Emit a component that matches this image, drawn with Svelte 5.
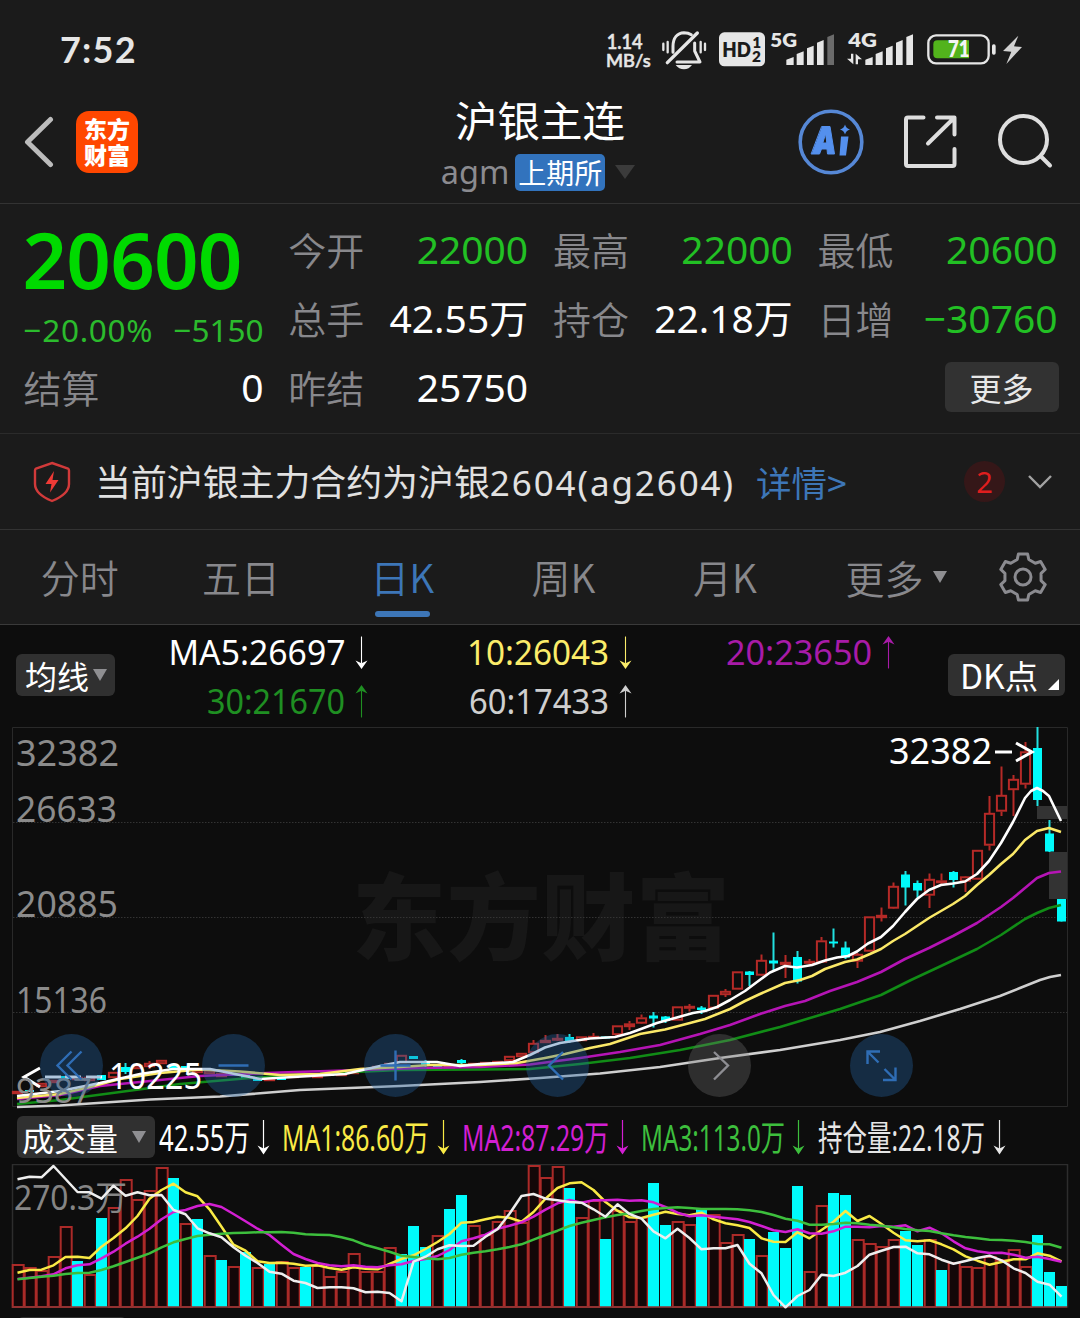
<script>
  const quotes = [
    { label: '今开', value: '22000', down: true },
    { label: '最高', value: '22000', down: true },
    { label: '最低', value: '20600', down: true },
    { label: '总手', value: '42.55万' },
    { label: '持仓', value: '22.18万' },
    { label: '日增', value: '−30760', down: true }
  ];
  const tabs = ['分时', '五日', '日K', '周K', '月K'];

  const slot = (i) => 17.5 + 12 * i;

  // [up?, body top, body bottom, high, low]
  const candles = [
    [1, 1091, 1094], [0, 1090, 1092], [1, 1083, 1087], [1, 1080, 1083], [0, 1076, 1079], [1, 1077, 1080],
    [1, 1077, 1081], [0, 1075, 1080], [1, 1072, 1078], [0, 1067, 1072, 1063, 1074], [1, 1065, 1069],
    [1, 1063, 1067, 1061, 1069], [1, 1060, 1064], [0, 1065, 1069], [0, 1066, 1069], [1, 1069, 1073],
    [1, 1070, 1074], [1, 1073, 1077], [0, 1073, 1076], [0, 1075, 1078], [0, 1078, 1081], [1, 1078, 1081],
    [0, 1077, 1080], [1, 1075, 1078], [1, 1074, 1077], [1, 1075, 1078], [0, 1073, 1076], [1, 1073, 1076],
    [1, 1071, 1074], [1, 1068, 1071], [1, 1066, 1069], [1, 1063, 1067], [1, 1055, 1063], [0, 1056, 1059],
    [0, 1063, 1066, 1060, 1069], [0, 1066, 1069], [1, 1066, 1069], [0, 1060, 1063, 1059, 1065], [1, 1063, 1066],
    [1, 1062, 1065], [1, 1061, 1064], [1, 1056, 1061], [1, 1053, 1057], [1, 1043, 1053, 1040, 1053],
    [1, 1040, 1043, 1035, 1043], [1, 1038, 1040, 1034, 1041], [0, 1037, 1041, 1034, 1043], [1, 1036.5, 1041],
    [1, 1036, 1038, 1033, 1038], [0, 1036.5, 1038.5], [1, 1025.5, 1035], [1, 1023.5, 1027, 1021, 1030],
    [1, 1017.5, 1023.5, 1014.5, 1024], [0, 1015.5, 1018.5, 1012, 1027.5], [0, 1016.5, 1021, 1016, 1023],
    [1, 1006.5, 1020.5], [1, 1006, 1008.5, 1004, 1011.5], [0, 1007.5, 1010, 1006, 1014], [1, 995, 1008.5],
    [1, 991, 995, 989, 997], [1, 971.5, 989.5], [0, 971.5, 975, 971, 986], [1, 960, 975.5, 954.5, 976],
    [0, 960.5, 963.5, 932.5, 971], [1, 962, 965, 955, 978], [0, 957, 981.5, 951, 983.5], [1, 961, 963, 959, 964],
    [1, 940.5, 962.5, 937, 963], [0, 941.5, 943.5, 928.5, 947.5], [0, 947.5, 957.5, 941.5, 959],
    [1, 954, 961.5, 953, 968], [1, 916.5, 951.5], [1, 915, 918, 907.5, 921.5], [1, 886, 908.5, 882.5, 909],
    [0, 874.5, 887.5, 871, 905.5], [0, 883, 890.5, 880.5, 898], [1, 879, 895.5, 873.5, 908],
    [1, 880.5, 882.5, 873.5, 884], [0, 872, 880, 871, 887.5], [1, 876.5, 881.5, 876, 892], [1, 850, 879.5],
    [1, 813, 845.5, 796, 850.5], [1, 795, 811.5, 766.5, 816], [1, 779, 790, 775, 816], [1, 751.5, 784.5, 742, 788.5],
    [0, 748, 800, 727, 806], [0, 833.5, 851.5, 820, 852], [0, 899, 921.5]
  ];

  const averages = [
    { color: '#cfcfcf', points: '17,1107 60,1105.5 150,1099.5 220,1096.5 300,1090 400,1086 480,1082 540,1078 600,1073.5 660,1067 720,1058 780,1050 840,1040 880,1032 920,1021 960,1009 1000,996 1020,988 1040,980 1050,977 1061,975' },
    { color: '#118c16', points: '17,1104 60,1100 120,1092 180,1084 250,1078 320,1073.5 400,1070 480,1069.5 530,1069 580,1064 630,1058 680,1050 730,1040 780,1027 810,1018 840,1009 881,995 911,980 941,966 977,949 1001,935 1025,919 1037,913 1049,908 1061,905' },
    { color: '#b514b5', points: '17,1099 60,1095 100,1086 150,1081 200,1076 280,1072.5 360,1070 420,1068 480,1067 530,1064.5 580,1058 620,1052 660,1045 700,1034 730,1025 760,1014 785,1006 805,1001 830,991 857,982 881,972 905,959 929,948 953,936 977,923 1001,907 1013,898 1025,888 1037,878 1049,873 1061,871.5' },
    { color: '#fbe968', points: '17,1098 60,1094 90,1087 120,1079 160,1073 200,1069.5 240,1071.5 280,1075 320,1074 360,1069 400,1067 430,1065 480,1065 517,1063 545,1058 565,1054 590,1048 610,1044 640,1034 665,1029.5 690,1023 705,1019 730,1009 745,1001 760,994 785,983 800,980 812,976 825,969 845,962 857,959.5 870,954 881,949 893,941 905,934 929,918 953,904 965,896 977,885 989,875 1001,864 1013,854 1025,840 1037,831 1049,828 1061,832' },
    { color: '#ffffff', points: '17,1096 60,1091 100,1083 140,1074 173,1069 210,1069 235,1074 260,1079 310,1076 345,1074 380,1066 400,1062 437,1062 460,1066 480,1064 513,1062 530,1055 545,1047.5 560,1043 573,1041 590,1038.5 615,1037 630,1033 645,1027.5 657,1023 675,1018 693,1013 705,1011 717,1007 730,1000 745,991 757,982 770,972.5 785,966 797,967.5 812,965 825,960.5 837,957.5 848,956 857,951.5 868,943.5 881,937 893,926 905,912 917,899 929,890 941,885 953,883.5 965,881.5 977,874 989,861 1001,843 1013,822 1025,798 1031,791 1037,788 1043,791 1049,796 1061,821' }
  ];

  // Negative values are falling sessions (solid bars); the magnitude is the bar's top.
  const volumes = [
    1265, 1268, 1271, 1257, 1227, -1261, 1275, -1218, 1208, 1180, 1200, 1191, 1168, -1178, 1224, -1219, 1256, -1260,
    1267, -1252, 1268, -1264, 1262, 1268, -1267, 1266, 1277, 1272, 1254, 1272, 1272, 1248, -1254, -1226, -1247, 1236,
    -1209, -1195, 1226, 1235, 1222, 1211, 1223, 1166, 1178, 1167, -1188, 1218, 1201, -1239, 1211, 1222, 1218, -1183,
    -1225, 1222, 1225, -1208, 1215, 1243, 1235, -1239, 1256, -1232, -1248, -1186, 1272, 1206, -1193, -1195, 1240, 1244,
    1247, 1240, -1231, -1245, 1240, -1270, 1263, 1267, 1268, 1257, 1260, 1250, 1267, -1235, -1272, -1286
  ];

  // Offsets in thirds of a pixel below y = 1110, one per session.
  const volumeLines = [
    { color: '#f9ea45', v: [488,480,479,466,441,440,444,410,384,355,318,266,240,221,247,259,298,350,404,422,454,459,458,461,467,466,474,479,472,476,478,462,447,436,417,396,372,338,336,328,320,323,335,306,266,234,220,217,240,276,302,322,324,314,305,312,316,308,328,340,346,354,385,395,396,367,385,360,335,303,333,318,342,368,391,394,391,403,418,439,452,464,456,448,448,430,437,454] },
    { color: '#d21fd2', v: [507,503,499,493,475,466,463,445,425,401,380,356,328,306,300,288,282,291,312,334,356,375,404,432,447,459,466,469,466,470,472,466,463,453,447,438,420,394,385,374,356,347,337,320,299,280,270,278,271,271,269,272,271,277,291,308,319,316,320,324,328,336,348,361,366,358,370,371,364,350,350,352,348,350,346,364,353,370,394,415,424,429,428,434,443,440,447,455] },
    { color: '#3dbf3d', v: [508,504,500,497,492,489,488,480,469,456,443,430,412,397,387,378,374,371,369,368,367,367,366,368,373,374,375,382,391,405,415,425,437,441,445,448,444,434,428,424,418,411,403,389,375,362,348,338,330,322,315,310,303,297,294,292,294,297,297,297,298,301,306,315,326,332,344,344,342,338,340,344,347,352,357,361,363,370,376,381,385,389,390,392,396,402,403,413] },
    { color: '#eeeeee', v: [208,200,202,168,207,246,247,266,227,257,247,256,255,300,313,355,370,382,412,437,459,485,491,512,519,534,532,532,535,547,545,549,574,455,440,418,406,408,407,380,358,311,258,252,266,271,276,278,298,320,283,312,326,364,385,356,384,418,415,415,405,461,490,555,592,558,540,494,498,488,468,434,422,411,410,430,433,449,461,453,444,437,451,475,489,515,524,560] }
  ];
  const linePoints = (v) => v.map((n, i) => `${slot(i)},${(1110 + n / 3).toFixed(1)}`).join(' ');

  const gear = [0, 60, 120, 180, 240, 300]
    .flatMap((deg) => {
      const a = (deg * Math.PI) / 180;
      return [[-5.8, -17.5], [-4.6, -23], [4.6, -23], [5.8, -17.5]].map(
        ([x, y]) => `${(x * Math.cos(a) - y * Math.sin(a)).toFixed(2)},${(x * Math.sin(a) + y * Math.cos(a)).toFixed(2)}`
      );
    })
    .join(' ');

  const maLegend = [
    { t: 'MA5:26697', x: 168.5, w: 177, y: 665, c: '#ffffff', ax: 361.5, up: false },
    { t: '10:26043', x: 467, w: 142, y: 665, c: '#fbec6a', ax: 625.5, up: false },
    { t: '20:23650', x: 726, w: 146, y: 665, c: '#a81ba8', ax: 888.5, up: true },
    { t: '30:21670', x: 207, w: 138, y: 714, c: '#1f8f22', ax: 361.5, up: true },
    { t: '60:17433', x: 469, w: 140, y: 714, c: '#cfcfcf', ax: 625.5, up: true }
  ];
  const volLegend = [
    { t: '42.55万', x: 159, w: 91, c: '#ffffff', ax: 263.5 },
    { t: 'MA1:86.60万', x: 282, w: 147, c: '#f9ea45', ax: 443.5 },
    { t: 'MA2:87.29万', x: 462, w: 147, c: '#d21fd2', ax: 622.5 },
    { t: 'MA3:113.0万', x: 641, w: 144, c: '#3dbf3d', ax: 798.5 },
    { t: '持仓量:22.18万', x: 818, w: 167, c: '#e6e6e6', ax: 999.5 }
  ];
  const shaft = 'M0-17V12';
  const head = 'M0 17.5L-6 8.5L0 11.500L6 8.5Z';
</script>

<div class="app">
  <div class="status">
    <span class="clock">7:52</span>
    <svg class="indicators" viewBox="75 50 1260 135" fill="#e6e6e6">
      <g font-family="Lato, sans-serif" font-weight="600" stroke="#e6e6e6" stroke-width="1.500">
        <text x="80" y="116" font-size="61" textLength="108" lengthAdjust="spacingAndGlyphs">1.14</text>
        <text x="78" y="171" font-size="54" textLength="134" lengthAdjust="spacingAndGlyphs">MB/s</text>
      </g>
      <g fill="none" stroke="#e6e6e6" stroke-width="10" stroke-linecap="round">
        <path stroke-width="7" d="M250 100V119M263 95V126M362 95V126M375 100V119" />
        <path d="M262 157L352 68" />
        <path d="M279 126V108C279 82 292 68 312 67C321 67 328 69 334 73M344 98V122L360 155H291" stroke-linejoin="round" stroke-width="9" />
      </g>
      <path d="M287 164H336C330 172 322 177 312 177S293 172 287 164Z" />
      <rect x="417" y="66" width="138" height="102" rx="16" />
      <g fill="#1b1b1b" font-family="Lato, sans-serif" font-weight="800">
        <text x="427" y="139" font-size="62" textLength="86" lengthAdjust="spacingAndGlyphs">HD</text>
        <text x="517" y="112" font-size="46">1</text>
        <text x="516" y="156" font-size="46">2</text>
      </g>
      <g font-family="Lato, sans-serif" font-weight="800" font-size="58">
        <text x="571" y="110" textLength="80" lengthAdjust="spacingAndGlyphs">5G</text>
        <text x="805" y="110" textLength="86" lengthAdjust="spacingAndGlyphs">4G</text>
      </g>
      {#each [0, 237] as dx, n}
        <g transform="translate({dx} 0)">
          <path d="M619 164V148L641 140V164ZM650 164V131L671 123V164ZM681 164V114L701 106V164ZM711 164V97L731 89V164Z" />
          <path d="M742 164V80L762 72V164Z" fill={n ? '#e6e6e6' : '#6b6b6b'} />
        </g>
      {/each}
      <path d="M813 130H820V162L801 145H813ZM827 162V130L846 147H834V162Z" />
      <rect x="1045" y="75" width="181" height="84" rx="23" fill="none" stroke="#e6e6e6" stroke-width="7" />
      <path d="M1072 90H1167V144H1072Q1060 144 1060 132V102Q1060 90 1072 90Z" fill="#52b31c" />
      <text x="1104" y="141" font-family="Lato, sans-serif" font-weight="800" font-size="66" textLength="65" lengthAdjust="spacingAndGlyphs" fill="#f4f4f4">71</text>
      <rect x="1236" y="102" width="11" height="31" rx="5" />
      <path d="M1315 76L1269 122L1294 124L1279 161L1326 110L1302 108Z" fill="#d2d2d2" />
    </svg>
  </div>

  <header>
    <svg class="back" viewBox="0 0 30 52"><path d="M26.500 3.500L3.500 26L26.500 48.500" /></svg>
    <div class="logo"><span>东方</span><span>财富</span></div>
    <div class="title">
      <h1>沪银主连</h1>
      <div class="code"><span>agm</span><b>上期所</b><i></i></div>
    </div>
    <svg class="actions" viewBox="797 108 258 68" fill="none" stroke="#dedede" stroke-width="4" stroke-linecap="round" stroke-linejoin="round">
      <circle cx="831" cy="142" r="30.800" stroke="#5688d6" stroke-width="3.600" />
      <g fill="#5490ee" stroke="none">
        <path fill-rule="evenodd" d="M822 126.500H830L834.500 154H827.500L827 149H821.500L819.500 154H811.500ZM825.500 134L822.800 143H826.500Z" stroke="#5490ee" stroke-width="1" />
        <path d="M841 136.500H848.500L846 155.500H839.500ZM845 124.500Q846 128.500 850 129.500Q846 130.500 845 134.500Q844 130.500 840 129.500Q844 128.500 845 124.500Z" />
      </g>
      <path d="M923.500 117.500H908Q906 117.500 906 119.500V164Q906 166 908 166H952.500Q954.500 166 954.500 164V149M937 117.500H954.500V134.500M953.500 118.500L928 143.500" />
      <circle cx="1023.500" cy="139.500" r="23.500" />
      <path d="M1041 156.500L1050 165.500" />
    </svg>
  </header>

  <section class="quote">
    <div class="last">
      <strong>20600</strong>
      <div class="change"><span>−20.00%</span><span>−5150</span></div>
    </div>
    {#each quotes as q}
      <div class="cell"><span>{q.label}</span><em class:down={q.down}>{q.value}</em></div>
    {/each}
    <div class="cell"><span>结算</span><em>0</em></div>
    <div class="cell"><span>昨结</span><em>25750</em></div>
    <button class="more">更多</button>
  </section>

  <section class="notice">
    <svg class="shield" viewBox="0 0 38 42">
      <path d="M19 2L35 7.500Q36 8 36 9.500V23Q36 33 19 40Q2 33 2 23V9.500Q2 8 3 7.500Z" fill="none" stroke="#d13a3a" stroke-width="2.400" />
      <path d="M21 10L12.500 23H18.500L17 31.500L25.500 19H19.500Z" fill="#ee3a36" />
    </svg>
    <p>当前沪银主力合约为沪银<span>2604(ag2604)</span></p>
    <a href="#detail">详情<span>&gt;</span></a>
    <b>2</b>
    <svg class="chev" viewBox="0 0 26 16"><path d="M2 2L13 13L24 2" /></svg>
  </section>

  <nav>
    {#each tabs as tab}
      <button class:active={tab === '日K'}>{tab}</button>
    {/each}
    <button class="other">更多<i></i></button>
    <svg class="gear" viewBox="-25 -25 50 50"><polygon points={gear} /><circle r="8" /></svg>
  </nav>

  <section class="legend">
    <button class="chip avg">均线<i></i></button>
    <svg viewBox="120 625 820 100">
      {#each maLegend as m}
        <text x={m.x} y={m.y} font-size="34" textLength={m.w} lengthAdjust="spacingAndGlyphs" fill={m.c}>{m.t}</text>
        <g transform="translate({m.ax} {m.y - 12.5}) scale(1 {m.up ? -0.94 : 0.94})">
          <path d={shaft} stroke={m.c} stroke-width="1.100" />
          <path d={head} fill={m.c} />
        </g>
      {/each}
    </svg>
    <button class="chip dk">DK点<i></i></button>
  </section>

  <svg class="chart" viewBox="0 725 1080 384">
    <text x="352" y="953" font-size="94" font-weight="900" textLength="378" fill="#171717">东方财富</text>
    <path d="M12.500 727.500H1067.500V1106.500H12.500Z" fill="none" stroke="#292929" />
    <path d="M13 822.500H1067M13 917.500H1067M13 1012.500H1067" stroke="#333" stroke-dasharray="1.500 1.500" />
    <path d="M1037 806H1067V819H1037ZM1049 852H1067V899H1049Z" fill="#333" />
    <g fill="#8b8b8b" font-size="35.500">
      <text x="16" y="766" textLength="103" lengthAdjust="spacingAndGlyphs">32382</text>
      <text x="16" y="822" textLength="101" lengthAdjust="spacingAndGlyphs">26633</text>
      <text x="16" y="917" textLength="102" lengthAdjust="spacingAndGlyphs">20885</text>
      <text x="16" y="1013" textLength="91" lengthAdjust="spacingAndGlyphs">15136</text>
    </g>
    {#each candles as [up, top, bottom, high = top, low = bottom], i}
      {#if up}
        <path d="M{slot(i)} {high}V{top}M{slot(i)} {bottom}V{low}" stroke="#b52a27" stroke-width="2" />
        <rect x={slot(i) - 4.6} y={top + 0.8} width="9.200" height={Math.max(1, bottom - top - 1.6)} fill="none" stroke="#b52a27" stroke-width="2" />
      {:else}
        <path d="M{slot(i)} {high}V{low}" stroke="#22e0e0" stroke-width="2" />
        <rect x={slot(i) - 4.5} y={top} width="9" height={bottom - top} fill="#00fbfb" />
      {/if}
    {/each}
    {#each averages as line}
      <polyline points={line.points} fill="none" stroke={line.color} stroke-width="2.600" stroke-linejoin="round" />
    {/each}
    <g fill="#fff" font-size="35.500">
      <text x="889" y="764" textLength="103" lengthAdjust="spacingAndGlyphs">32382</text>
      <text x="109" y="1089" textLength="93" lengthAdjust="spacingAndGlyphs">10225</text>
    </g>
    <g fill="none" stroke="#fff" stroke-width="3">
      <path d="M995 752H1012M1016 743L1032 752L1016 761" />
      <path d="M40 1068L24 1077L40 1087M45 1077H61M65 1077H81M86 1077H102" />
    </g>
    <text x="16" y="1103" textLength="76" lengthAdjust="spacingAndGlyphs" fill="#8b8b8b" font-size="35">9387</text>
    <g fill="#2563a3" fill-opacity="0.36">
      {#each [71.5, 233.5, 395.5, 557.5, 881.5] as cx}<circle {cx} cy="1065.500" r="31.500" />{/each}
      <circle cx="719.500" cy="1065.500" r="31.500" fill="#777" fill-opacity="0.32" />
    </g>
    <g fill="none" stroke="#2f6db5" stroke-width="2.400">
      <path d="M71.500 1051.500L57.500 1065.500L71.500 1079.500M81.500 1051.500L67.500 1065.500L81.500 1079.500" />
      <path d="M218.500 1065.500H248.500M380.500 1065.500H410.500M395.500 1050.500V1080.500" />
      <path d="M563 1052L549 1065.500L563 1079.500" />
      <path d="M867.500 1064V1051.500H880M867.500 1051.500L878.500 1062.500M895.500 1067.500V1080H883M895.500 1080L884.500 1069" />
      <path d="M714 1052L728 1065.500L714 1079.500" stroke="#8d8d92" />
    </g>
  </svg>

  <section class="vol-head">
    <button class="chip vol">成交量<i></i></button>
    <svg viewBox="155 1109 925 55">
      {#each volLegend as m}
        <text x={m.x} y="1150.500" font-size="35.500" textLength={m.w} lengthAdjust="spacingAndGlyphs" fill={m.c}>{m.t}</text>
        <g transform="translate({m.ax} 1137)">
          <path d={shaft} stroke={m.c} stroke-width="1.200" />
          <path d={head} fill={m.c} />
        </g>
      {/each}
    </svg>
  </section>

  <svg class="chart" viewBox="0 1164 1080 154">
    <path d="M12.500 1307V1164.500H1067.500V1307Z" fill="none" stroke="#2d2d2d" stroke-width="1.500" />
    {#each volumes as v, i}
      {#if v > 0}
        <rect x={slot(i) - 4.8} y={v} width="11" height={1307 - v} fill="#130708" stroke="#ab2a28" stroke-width="2" />
      {:else}
        <rect x={slot(i) - 5.5} y={-v} width="11" height={1307 + v} fill="#00fbfb" />
      {/if}
    {/each}
    <path d="M12 1307H1067" stroke="#8a3534" stroke-width="1.600" />
    <text x="14" y="1210" font-size="34" textLength="113" lengthAdjust="spacingAndGlyphs" fill="#858585">270.3万</text>
    {#each volumeLines as line}
      <polyline points={linePoints(line.v)} fill="none" stroke={line.color} stroke-width="2.500" stroke-linejoin="round" />
    {/each}
    <rect x="17" y="1317" width="110" height="12" rx="6" fill="#303030" />
  </svg>
</div>

<style>
  :global(body) { background: #0d0d0d; }
  .app {
    width: 1080px; height: 1318px; overflow: hidden; display: flex; flex-direction: column;
    background: #0d0d0d; color: #fff; font-family: "Noto Sans", "Noto Sans CJK SC", sans-serif;
  }
  h1, p { margin: 0; font-weight: 400; }
  button { border: 0; padding: 0; background: none; color: inherit; font: inherit; }
  svg { display: block; flex: none; }
  i { width: 0; height: 0; border: solid transparent; }

  .status { height: 90px; background: #1b1b1b; display: flex; align-items: center; padding: 0 55px 0 60px; box-sizing: border-box; flex: none; justify-content: space-between; }
  .clock { font: 700 36px/40px Lato, sans-serif; letter-spacing: 1.2px; color: #e6e6e6; padding-top: 8px; }
  .indicators { width: 420px; height: 45px; margin-top: 8px; }

  header { height: 113px; background: #1b1b1b; border-bottom: 1px solid #333; display: flex; flex: none; padding: 0 25px 0 24px; }
  .back { width: 30px; height: 52px; margin-top: 26px; fill: none; stroke: #bcbcbc; stroke-width: 5; stroke-linecap: round; stroke-linejoin: round; }
  .logo { width: 62px; height: 62px; margin: 21px 0 0 22px; padding-bottom: 3px; box-sizing: border-box; border-radius: 13px; background: #ff4700; display: flex; flex-direction: column; justify-content: center; align-items: center; font: 800 23px/26px "Noto Sans CJK SC", sans-serif; }
  .title { width: 220px; margin-left: 292px; display: flex; flex-direction: column; align-items: center; }
  h1 { font: 400 42.500px/56px "Noto Sans CJK SC", sans-serif; padding-top: 1px; }
  .code { display: flex; align-items: center; margin-right: 4px; margin-top: 6px; height: 38px; font-size: 32.500px; line-height: 38px; color: #8b8b90; }
  .code b { width: 90px; height: 37px; margin-left: 6px; border-radius: 5px; background: #3273bd; color: #fff; font: 400 28px/37px "Noto Sans CJK SC", sans-serif; text-align: center; }
  .code i { border-width: 14px 10px 0; border-top-color: #3b3b3b; margin-left: 10px; }
  .actions { width: 258px; height: 68px; margin: 18px 0 0 auto; }

  .quote { height: 230px; flex: none; box-sizing: border-box; border-bottom: 1px solid #2b2b2b; background: #1b1b1b; padding: 10px 0 0 23.500px; display: grid; grid-template-columns: repeat(4, 240px); column-gap: 24.700px; grid-template-rows: repeat(3, 69.300px); align-content: start; }
  .last { grid-row: span 2; color: #00da00; }
  strong { display: block; font-weight: 600; font-size: 78px; line-height: 90px; height: 95px; letter-spacing: -0.800px; margin-left: -1px; }
  .change { display: flex; justify-content: space-between; font-size: 31.500px; line-height: 42px; color: #2bbb2d; }
  .change span:first-child { letter-spacing: 0.700px; }
  .cell { display: flex; justify-content: space-between; align-items: center; height: 69px; }
  .cell span { font: 350 38px/50px "Noto Sans CJK SC", sans-serif; color: #88888c; }
  em { font-style: normal; font-size: 39px; line-height: 50px; }
  .down { color: #22c024; }
  .more { grid-column: 4; width: 114px; height: 50px; margin: 9px -1px 0 auto; border-radius: 6px; background: #323232; color: #e8e8e8; font: 400 32px/50px "Noto Sans CJK SC", sans-serif; }

  .notice { height: 96px; flex: none; box-sizing: border-box; border-bottom: 1px solid #333; background: #1b1b1b; display: flex; align-items: center; padding: 0 27px 0 33px; color: #e1e1e1; }
  .shield { width: 38px; height: 42px; }
  .notice p { margin-left: 24px; font: 400 35.900px/50px "Noto Sans CJK SC", sans-serif; white-space: nowrap; }
  .notice p span { font-family: "Noto Sans", sans-serif; font-size: 35px; letter-spacing: 1.900px; }
  .notice a { margin-left: 21px; color: #3d76b7; text-decoration: none; font: 400 35.500px/50px "Noto Sans CJK SC", sans-serif; white-space: nowrap; }
  .notice b { margin-left: auto; width: 41px; height: 41px; border-radius: 50%; background: #351718; color: #df1e1e; font-weight: 400; font-size: 29px; line-height: 41px; text-align: center; }
  .chev { width: 26px; height: 16px; margin-left: 22px; fill: none; stroke: #a2a2a2; stroke-width: 2.400; }

  nav { height: 95px; flex: none; box-sizing: border-box; background: #1b1b1b; border-bottom: 1px solid #3a3a3a; display: flex; align-items: center; padding-right: 32px; color: #88888c; }
  nav button { width: 161.300px; height: 94px; font: 350 39px/92px "Noto Sans CJK SC", sans-serif; display: flex; flex-direction: column; align-items: center; }
  nav button:first-child { margin-left: -1px; }
  nav .active { color: #3d76b7; }
  nav .active::after { content: ""; width: 55px; height: 6px; border-radius: 3px; background: #3d76b7; margin-top: -11px; }
  nav .other { flex-direction: row; width: 105px; margin-left: 40px; }
  nav i { border-width: 12px 7px 0; border-top-color: #8f8f92; margin-left: 9px; }
  .gear { width: 50px; height: 50px; margin-left: auto; fill: none; stroke: #8b8b90; stroke-width: 3; stroke-linejoin: round; }

  .chip { background: #303030; border-radius: 6px; color: #fff; font: 400 32px/42px "Noto Sans CJK SC", sans-serif; display: flex; align-items: center; height: 42px; flex: none; white-space: nowrap; }
  .chip i { border-width: 12px 7px 0; border-top-color: #8f8f92; }
  .legend { height: 100px; flex: none; display: flex; align-items: center; padding: 0 16px; }
  .legend svg { width: 820px; height: 100px; margin-left: 5px; }
  .avg { width: 99px; padding-left: 9px; box-sizing: border-box; }
  .avg i { margin-left: 4px; }
  .dk { width: 117px; padding-left: 12px; box-sizing: border-box; margin-left: 8px; font-size: 33.500px; position: relative; }
  .dk i { border-width: 0 0 11px 11px; border-color: transparent transparent #fff; position: absolute; right: 6px; bottom: 6px; }
  .chart { width: 1080px; }
  .vol-head { height: 55px; flex: none; display: flex; align-items: flex-start; padding-left: 17px; }
  .vol { width: 138px; margin-top: 7px; padding-left: 5px; box-sizing: border-box; }
  .vol i { margin-left: 14px; }
  .vol-head svg { width: 925px; height: 55px; }
</style>
